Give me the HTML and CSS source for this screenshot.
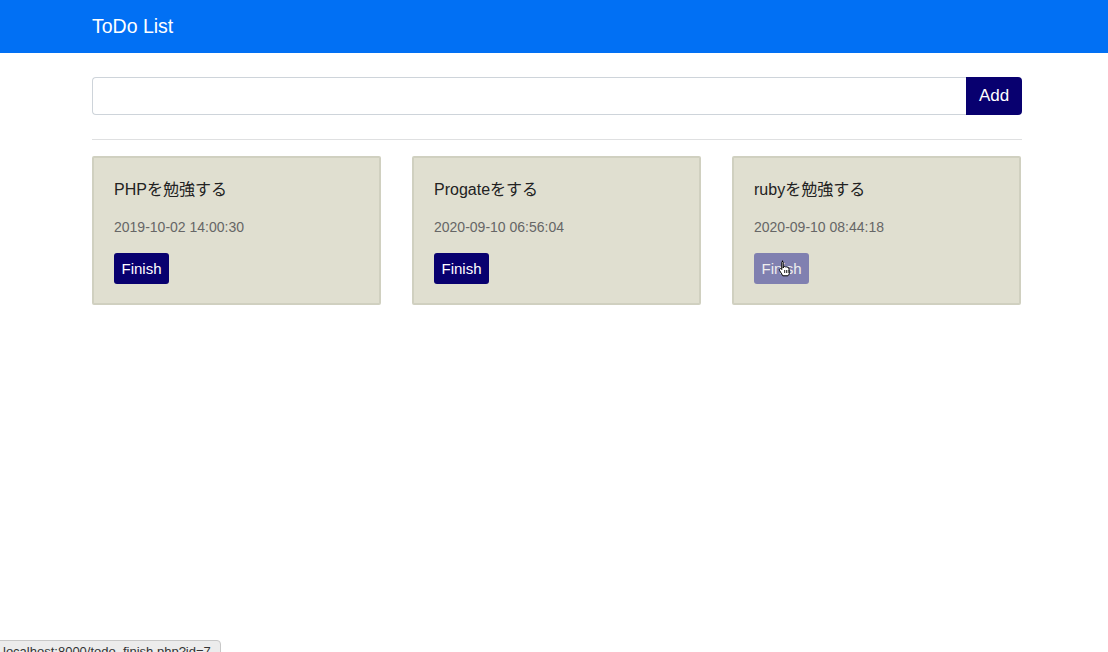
FILE: index.html
```html
<!DOCTYPE html>
<html lang="ja">
<head>
<meta charset="utf-8">
<title>ToDo List</title>
<link rel="stylesheet" href="styles.css">
</head>
<body>
<nav class="navbar">
  <div class="container"><span class="brand">ToDo List</span></div>
</nav>
<main class="container">
  <form class="add-form">
    <input class="add-input" type="text">
    <button class="add-btn" type="button">Add</button>
  </form>
  <hr class="divider">
  <div class="cards">
    <div class="card">
      <h5 class="card-title">PHPを勉強する</h5>
      <p class="card-date">2019-10-02 14:00:30</p>
      <button class="finish-btn" type="button">Finish</button>
    </div>
    <div class="card">
      <h5 class="card-title">Progateをする</h5>
      <p class="card-date">2020-09-10 06:56:04</p>
      <button class="finish-btn" type="button">Finish</button>
    </div>
    <div class="card">
      <h5 class="card-title">rubyを勉強する</h5>
      <p class="card-date">2020-09-10 08:44:18</p>
      <button class="finish-btn hover" type="button">Finish
        <svg class="cursor" width="14" height="17" viewBox="0 0 14 17">
          <path d="M4 1.2c.7 0 1.2.5 1.2 1.2V8l.3-1.2c.6-.5 1.5-.3 1.8.3.5-.5 1.4-.4 1.8.3.6-.4 1.5-.1 1.7.6l.6 3.5c.3 1.6-.3 3.2-1.5 4.3H4.8L1.5 10.4c-.4-.6-.2-1.3.4-1.6.5-.3 1.1-.2 1.5.2l.4.5V2.4c0-.7.5-1.2 1.2-1.2z" fill="#fff" stroke="#000" stroke-width="1"/>
          <path d="M6.6 10v3M8.4 10v3M10.2 10v3" stroke="#000" stroke-width=".8"/>
        </svg>
      </button>
    </div>
  </div>
</main>
<div class="statusbar">localhost:8000/todo_finish.php?id=7</div>
</body>
</html>
```
FILE: styles.css
```css
* { box-sizing: border-box; }
body {
  margin: 0;
  font-family: "Liberation Sans", "Noto Sans CJK JP", sans-serif;
  color: #212529;
  background: #fff;
}
.container {
  width: 930px;
  margin-left: 92px;
}
.navbar {
  background: #0170f4;
  height: 53px;
  display: flex;
  align-items: center;
}
.brand {
  color: #fff;
  font-size: 19.5px;
  line-height: 24px;
  display: block;
  margin-top: -2px;
}
main.container { padding-top: 24px; }
.add-form {
  display: flex;
  height: 38px;
  margin: 0;
}
.add-input {
  flex: 1;
  height: 38px;
  border: 1px solid #ced4da;
  border-right: none;
  border-radius: 4px 0 0 4px;
  font-size: 16px;
  padding: 6px 12px;
  font-family: inherit;
}
.add-btn {
  width: 56px;
  height: 38px;
  border: none;
  background: #08006f;
  color: #fff;
  font-family: inherit;
  font-size: 17px;
  border-radius: 0 4px 4px 0;
  padding: 0;
}
.divider {
  border: 0;
  border-top: 1px solid #dfe0e1;
  margin: 24px 0 16px;
  height: 0;
}
.cards {
  display: grid;
  grid-template-columns: repeat(3, 289px);
  column-gap: 31px;
}
.card {
  background: #e0dfd0;
  border: 2px solid #d0d0c0;
  border-radius: 2px;
  padding: 20px 20px 18px;
  height: 149px;
}
.card-title {
  margin: 0;
  font-size: 16px;
  font-weight: normal;
  line-height: 24px;
  color: #222;
}
.card-date {
  margin: 15px 0 15px;
  font-size: 14px;
  line-height: 21px;
  color: #666;
}
.finish-btn {
  position: relative;
  height: 31px;
  width: 55px;
  padding: 0;
  border: none;
  border-radius: 3px;
  background: #08006f;
  color: #fff;
  font-family: inherit;
  font-size: 15px;
}
.finish-btn.hover { background: #8080b0; color: #eee; }
.cursor {
  position: absolute;
  left: 24px;
  top: 7px;
}
.statusbar {
  position: fixed;
  left: -4px;
  bottom: -10px;
  height: 22px;
  padding: 3px 9px 0 6px;
  background: #ececec;
  border: 1px solid #c8c8c8;
  border-radius: 4px;
  font-size: 13px;
  color: #333;
}
```
